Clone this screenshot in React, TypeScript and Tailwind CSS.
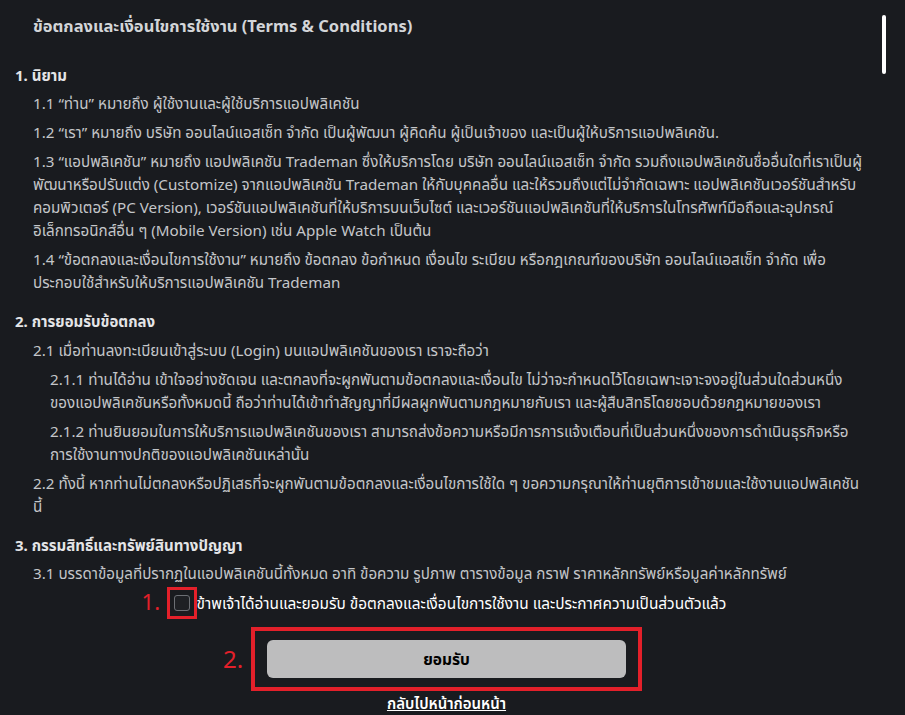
import React from "react";

const font = "font-['Noto_Sans','Noto_Sans_Thai','Liberation_Sans',sans-serif]";

const Section = ({ title, children }: { title: string; children: React.ReactNode }) => (
  <div className="mb-[16px]">
    <h3 className="text-[15px] font-bold text-[#e4e5e7] mb-[6px]">{title}</h3>
    <div className="flex flex-col gap-[6px]">{children}</div>
  </div>
);

const P = ({ sub, children }: { sub?: boolean; children: React.ReactNode }) => (
  <p className={`${sub ? "pl-[35px]" : "pl-[18px]"} text-[15.2px] leading-[23px] text-[#c4c6c9]`}>{children}</p>
);

export default function App() {
  return (
    <div className={`${font} relative min-h-[715px] w-full bg-[#191b1f] text-white`}>
      {/* scrollbar thumb */}
      <div className="absolute right-[19px] top-[15px] h-[59px] w-[4px] rounded-sm bg-white" />

      <div className="pl-[15px] pr-[41px] pt-[14px]">
        <h2 className="pl-[18px] text-[16.5px] font-bold text-[#d3d5d8] mb-[25px]">
          ข้อตกลงและเงื่อนไขการใช้งาน (Terms &amp; Conditions)
        </h2>

        <Section title="1. นิยาม">
          <P>1.1 “ท่าน” หมายถึง ผู้ใช้งานและผู้ใช้บริการแอปพลิเคชัน</P>
          <P>1.2 “เรา” หมายถึง บริษัท ออนไลน์แอสเซ็ท จำกัด เป็นผู้พัฒนา ผู้คิดค้น ผู้เป็นเจ้าของ และเป็นผู้ให้บริการแอปพลิเคชัน.</P>
          <P>
            1.3 “แอปพลิเคชัน” หมายถึง แอปพลิเคชัน Trademan ซึ่งให้บริการโดย บริษัท ออนไลน์แอสเซ็ท จำกัด รวมถึงแอปพลิเคชันชื่ออื่นใดที่เราเป็นผู้<wbr />พัฒนาหรือปรับแต่ง (Customize) จากแอปพลิเคชัน Trademan ให้กับบุคคลอื่น และให้รวมถึงแต่ไม่จำกัดเฉพาะ แอปพลิเคชันเวอร์ชันสำหรับคอมพิวเตอร์ (PC Version), เวอร์ชันแอปพลิเคชันที่ให้บริการบนเว็บไซต์ และเวอร์ชันแอปพลิเคชันที่ให้บริการในโทรศัพท์มือถือและอุปกรณ์อิเล็กทรอนิกส์อื่น ๆ (Mobile Version) เช่น Apple Watch เป็นต้น
          </P>
          <P>
            1.4 “ข้อตกลงและเงื่อนไขการใช้งาน” หมายถึง ข้อตกลง ข้อกำหนด เงื่อนไข ระเบียบ หรือกฎเกณฑ์ของบริษัท ออนไลน์แอสเซ็ท จำกัด เพื่อประกอบใช้สำหรับให้บริการแอปพลิเคชัน Trademan
          </P>
        </Section>

        <Section title="2. การยอมรับข้อตกลง">
          <P>2.1 เมื่อท่านลงทะเบียนเข้าสู่ระบบ (Login) บนแอปพลิเคชันของเรา เราจะถือว่า</P>
          <P sub>
            2.1.1 ท่านได้อ่าน เข้าใจอย่างชัดเจน และตกลงที่จะผูกพันตามข้อตกลงและเงื่อนไข ไม่ว่าจะกำหนดไว้โดยเฉพาะเจาะจงอยู่ในส่วนใดส่วนหนึ่งของแอปพลิเคชันหรือทั้งหมดนี้ ถือว่าท่านได้เข้าทำสัญญาที่มีผลผูกพันตามกฎหมายกับเรา และผู้สืบสิทธิโดยชอบด้วยกฎหมายของเรา
          </P>
          <P sub>
            2.1.2 ท่านยินยอมในการให้บริการแอปพลิเคชันของเรา สามารถส่งข้อความหรือมีการการแจ้งเตือนที่เป็นส่วนหนึ่งของการดำเนินธุรกิจหรือการใช้งานทางปกติของแอปพลิเคชันเหล่านั้น
          </P>
          <P>
            2.2 ทั้งนี้ หากท่านไม่ตกลงหรือปฏิเสธที่จะผูกพันตามข้อตกลงและเงื่อนไขการใช้ใด ๆ ขอความกรุณาให้ท่านยุติการเข้าชมและใช้งานแอปพลิเคชัน<wbr />นี้
          </P>
        </Section>

        <Section title="3. กรรมสิทธิ์และทรัพย์สินทางปัญญา">
          <P>3.1 บรรดาข้อมูลที่ปรากฏในแอปพลิเคชันนี้ทั้งหมด อาทิ ข้อความ รูปภาพ ตารางข้อมูล กราฟ ราคาหลักทรัพย์หรือมูลค่าหลักทรัพย์</P>
        </Section>
      </div>

      <div className="-mt-[14px] flex flex-col items-center pr-[12px]">
        <label className="flex items-center">
          <span className="relative border-[3px] border-[#e3202a] px-[4px] py-[5px]">
            <span className="absolute -left-[28px] top-[0px] text-[22px] leading-none text-[#e3202a]">1.</span>
            <span className="block h-[16px] w-[16px] rounded-[3px] border border-[#6c6f74] bg-[#1e2024]" />
          </span>
          <span className="text-[15.4px] text-white">
            ข้าพเจ้าได้อ่านและยอมรับ ข้อตกลงและเงื่อนไขการใช้งาน และประกาศความเป็นส่วนตัวแล้ว
          </span>
        </label>

        <div className="relative mt-[8px] border-4 border-[#e3202a] px-[12px] py-[9px]">
          <span className="absolute -left-[32px] top-[16px] text-[24px] leading-none text-[#e3202a]">2.</span>
          <button className="h-[38px] w-[359px] rounded-md bg-[#bdbdbe] text-[15.5px] font-bold text-black">
            ยอมรับ
          </button>
        </div>

        <a className="mt-[1px] text-[15px] font-semibold text-white underline">กลับไปหน้าก่อนหน้า</a>
      </div>
    </div>
  );
}
